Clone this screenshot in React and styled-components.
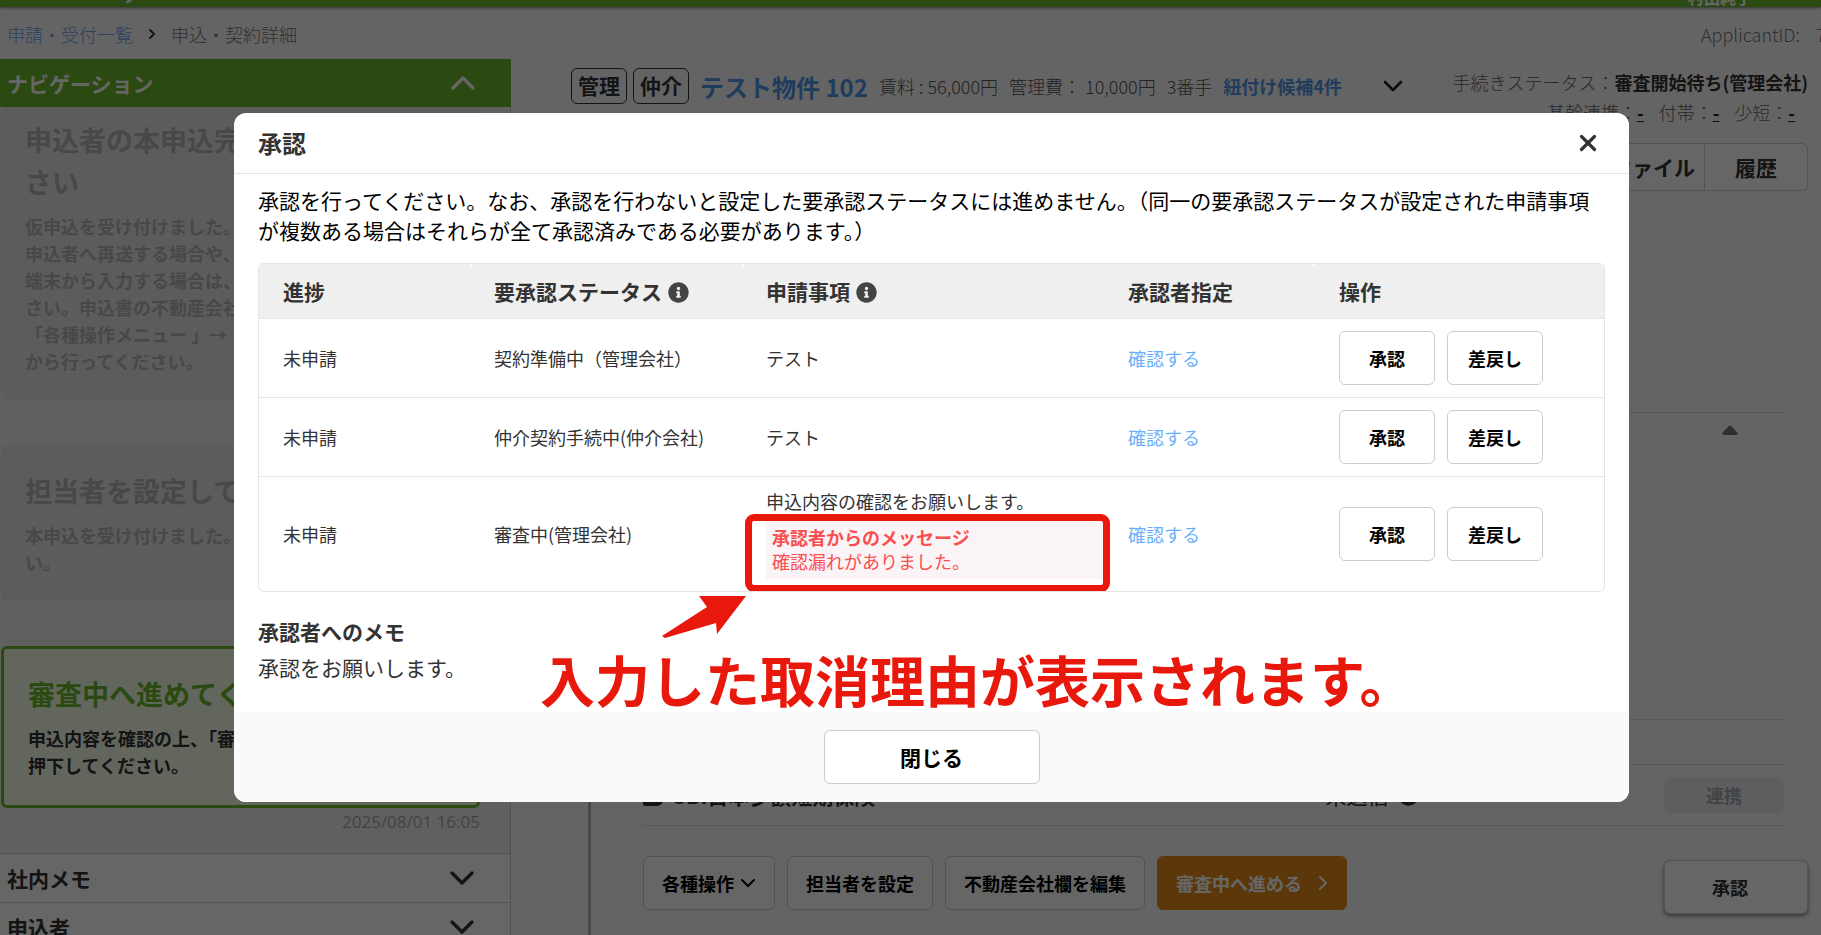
import React from "react";
import styled, { createGlobalStyle, css } from "styled-components";
import { ChevronDown, ChevronRight, ChevronUp, X } from "lucide-react";

const GlobalStyle = createGlobalStyle`
  *, *::before, *::after { box-sizing: border-box; }
  body {
    margin: 0;
    background: #fbfbfb;
    color: #333;
    font-family: "Noto Sans CJK JP", sans-serif;
    font-size: 18px;
    line-height: 27px;
    overflow: hidden;
  }
  h1, h2, h3, p { margin: 0; }
  a { color: inherit; text-decoration: none; }
  button { font-family: inherit; padding: 0; margin: 0; cursor: pointer; }
`;

const Page = styled.div`
  position: relative;
  height: 100vh;
  overflow: hidden;
`;

const TopBar = styled.header`
  display: flex;
  justify-content: space-between;
  align-items: flex-end;
  height: 7px;
  padding: 0 69px 0 38px;
  background: #6bb82c;
  color: #fff;
  font-weight: 700;
  box-shadow: 0 1px 3px rgba(0, 0, 0, 0.5);
`;

const Brand = styled.span`
  padding-bottom: 5px;
  font-size: 20px;
  line-height: 24px;
`;

const UserName = styled.span`
  padding-bottom: 1px;
  font-size: 16px;
  line-height: 18px;
`;

const CrumbBar = styled.nav`
  display: flex;
  align-items: center;
  gap: 11px;
  height: 52px;
  padding: 2px 0 0 7px;
  color: #777;
  font-weight: 300;
  white-space: nowrap;

  a { color: #6ba5f2; }
  svg { color: #333; }
`;

const ApplicantId = styled.span`
  display: flex;
  gap: 16px;
  margin-left: auto;
  width: 120px;
`;

const Columns = styled.div`
  display: flex;
  align-items: flex-start;
`;

const Side = styled.aside`
  flex: 0 0 511px;
  border-right: 1px solid #ccc;
  background: #f0f0f0;
`;

const AccordionHead = styled.button`
  display: flex;
  justify-content: space-between;
  align-items: center;
  width: 100%;
  height: 49px;
  padding: 0 28px 0 7px;
  border: 0;
  font-size: 21px;
  font-weight: 700;
  background: #fff;
  color: #333;
  border-top: 1px solid #ccc;

  ${(p) =>
    p.$open &&
    css`
      width: calc(100% + 1px);
      height: 48px;
      border: 0;
      background: #6bb82c;
      color: #fff;
    `}
`;

const Steps = styled.div`
  display: flex;
  flex-direction: column;
  gap: 45px;
  padding: 0 30px 0 1px;
`;

const stepTones = {
  done: css`
    background: #e6e6e6;
    color: #b4b4b4;
    border-color: #e6e6e6;
  `,
  current: css`
    background: #f8ffe9;
    border-color: #6bb82c;
  `,
};

const StepCard = styled.section`
  padding: ${(p) => p.$pad};
  border: 3px solid;
  border-radius: 6px;
  font-weight: 700;
  ${(p) => stepTones[p.$tone]}

  h2 {
    margin-bottom: 10px;
    font-size: 27px;
    line-height: 42px;
    color: ${(p) => (p.$tone === "current" ? "#6bb82c" : "inherit")};
  }
`;

const Stamp = styled.p`
  padding: 0 30px 18px;
  text-align: right;
  color: #a8a8a8;
  font-family: "Open Sans", sans-serif;
  font-size: 17px;
`;

const Main = styled.main`
  flex: 1;
  min-width: 0;
  padding: 5px 13px 0 60px;
`;

const PropertyBar = styled.div`
  display: flex;
  align-items: flex-start;
  height: 54px;
  white-space: nowrap;
`;

const Property = styled.div`
  display: flex;
  align-items: center;
  gap: 11px;
  height: 44px;
  flex: 1;
  font-weight: 300;
  color: #555;

  > svg { color: #222; margin-left: 24px; }
`;

const Tags = styled.span`
  display: flex;
  gap: 6px;
`;

const Tag = styled.span`
  padding: 3px 6px 4px;
  border: 1px solid #333;
  border-radius: 6px;
  font-size: 21px;
  font-weight: 700;
  color: #333;
`;

const PropertyName = styled.a`
  font-size: 24px;
  font-weight: 700;
  && { color: #5297e8; }
`;

const Candidates = styled.a`
  font-weight: 700;
  && { color: #5297e8; }
`;

const Status = styled.div`
  padding-top: 3px;
  text-align: right;
  color: #666;
  font-weight: 300;
  line-height: 30px;

  strong { font-weight: 700; color: #333; }
`;

const Links = styled.div`
  display: flex;
  justify-content: flex-end;
  gap: 15px;
  padding-right: 13px;

  a { text-decoration: underline; color: #222; font-weight: 700; }
`;

const TabRow = styled.div`
  display: flex;
  justify-content: flex-end;
  margin-top: 25px;
`;

const Tab = styled.button`
  width: ${(p) => p.$width}px;
  height: 48px;
  border: 1px solid #ccc;
  border-left-width: ${(p) => (p.$last ? 0 : 1)}px;
  border-radius: ${(p) => (p.$last ? "0 6px 6px 0" : "6px 0 0 6px")};
  background: #fff;
  font-size: 21px;
  font-weight: 700;
  color: #333;
`;

const Workflow = styled.div`
  margin: 221px 0 0 17px;
  border-left: 3px solid #b4b4b4;
  padding: 0 24px 60px 52px;
`;

const Collapse = styled.div`
  display: flex;
  justify-content: flex-end;
  height: 307px;
  padding: 12px 46px 0 0;
  border-top: 1px solid #ddd;
`;

const Line = styled.div`
  height: ${(p) => p.$height}px;
  border-top: 1px solid #ddd;
`;

const InsuranceRow = styled.div`
  display: flex;
  align-items: center;
  height: 62px;
  border-top: 1px solid #ddd;
  border-bottom: 1px solid #ddd;
  font-size: 21px;
`;

const InsuranceName = styled.div`
  display: flex;
  align-items: center;
  gap: 8px;
  flex: 1 1 682px;
  font-weight: 700;
`;

const InsuranceState = styled.div`
  display: flex;
  align-items: center;
  gap: 9px;
  flex: 1 1 338px;
`;

const LinkageButton = styled.button`
  width: 120px;
  height: 36px;
  border: 0;
  border-radius: 6px;
  background: #e5eaf0;
  color: #a8a8a8;
  font-size: 18px;
  font-weight: 700;
`;

const Actions = styled.div`
  display: flex;
  align-items: flex-start;
  gap: 12px;
  margin-right: -24px;
  padding-top: 30px;
`;

const Button = styled.button`
  display: flex;
  align-items: center;
  justify-content: center;
  width: ${(p) => (p.$width ? `${p.$width}px` : "auto")};
  height: 54px;
  padding: 0 18px;
  border: 1px solid #ccc;
  border-radius: 6px;
  background: #fff;
  color: #000;
  font-size: ${(p) => p.$size || 18}px;
  font-weight: 700;
  white-space: nowrap;

  svg { flex: none; }
`;

const MenuButton = styled(Button)`
  gap: 2px;
  padding: 0 12px 0 18px;
  justify-content: flex-start;
`;

const ProceedButton = styled(MenuButton)`
  gap: 9px;
  border-color: #e68a19;
  background: #e68a19;
  color: #fff;
`;

const FloatingButton = styled(Button)`
  margin: 4px 0 0 auto;
  padding: 0 30px 0 18px;
  box-shadow: 0 2px 4px rgba(0, 0, 0, 0.5);
  color: #333;
`;

const Overlay = styled.div`
  position: absolute;
  inset: 0;
  display: flex;
  align-items: flex-start;
  padding: 113px 192px 0 234px;
  background: rgba(0, 0, 0, 0.6);
`;

const Dialog = styled.section`
  position: relative;
  flex: 1;
  min-width: 0;
  border-radius: 12px;
  background: #fff;
  overflow: hidden;
`;

const DialogHead = styled.header`
  display: flex;
  justify-content: space-between;
  align-items: center;
  height: 61px;
  padding: 0 24px;
  border-bottom: 1px solid #e5e5e5;

  h1 { font-size: 24px; line-height: 36px; }
`;

const CloseIcon = styled.button`
  display: flex;
  padding: 4px;
  border: 0;
  background: none;
  color: #333;
`;

const DialogBody = styled.div`
  padding: 11px 24px 27px;
  font-size: 21px;
  line-height: 30px;
`;

const Lead = styled.p`
  color: #000;
`;

const Memo = styled.div`
  line-height: 36px;

  h3 { font-size: 21px; }
`;

const TableFrame = styled.div`
  margin: 18px 0 21px;
  border: 1px solid #e5e5e5;
  border-radius: 6px;
  overflow: hidden;
`;

const Table = styled.table`
  width: 100%;
  border-collapse: separate;
  border-spacing: 0;
  table-layout: fixed;
  font-size: 18px;
  line-height: 24px;

  th {
    height: 54px;
    padding: 0 24px;
    background: #efefef;
    text-align: left;
    font-size: 21px;
    white-space: nowrap;
  }
  th:nth-child(2), th:nth-child(3) { border-top-left-radius: 5px; }
  th:nth-child(4) { border-top-right-radius: 5px; }
  th svg { vertical-align: -3px; margin-left: 6px; }
  td {
    padding: 12px 0 12px 24px;
    border-top: 1px solid #e5e5e5;
  }
`;

const ConfirmLink = styled.a`
  color: #6bb0fa;
`;

const RowActions = styled.div`
  display: flex;
  gap: 12px;
`;

const ApproverMessage = styled.div`
  width: 340px;
  height: 60px;
  margin-top: 6px;
  padding: 6px;
  background: #fbf4f7;
  color: #f94f4f;
`;

const Subject = styled.div`
  position: relative;
`;

const Highlight = styled.span`
  position: absolute;
  left: -21px;
  top: 25px;
  width: 365px;
  height: 78px;
  border: 7px solid #e8190c;
  border-radius: 9px;
`;

const Callout = styled.div`
  position: absolute;
  left: 306px;
  top: 483px;
  color: #e8190c;
  white-space: nowrap;

  svg { display: block; margin-left: 122px; }
  p { font-size: 55px; line-height: 80px; font-weight: 700; }
`;

const DialogFoot = styled.footer`
  display: flex;
  justify-content: center;
  padding: 18px;
  background: #fafafa;
`;

const InfoIcon = ({ size = 21, color = "#444" }) => (
  <svg width={size} height={size} viewBox="0 0 512 512" fill={color} aria-hidden="true">
    <path d="M256 8C119 8 8 119 8 256s111 248 248 248 248-111 248-248S393 8 256 8zm0 110a42 42 0 1 1 0 84 42 42 0 0 1 0-84zm56 254a12 12 0 0 1-12 12h-88a12 12 0 0 1-12-12v-24a12 12 0 0 1 12-12h12v-64h-12a12 12 0 0 1-12-12v-24a12 12 0 0 1 12-12h64a12 12 0 0 1 12 12v100h12a12 12 0 0 1 12 12z" />
  </svg>
);

const rows = [
  { status: "契約準備中（管理会社）", subject: "テスト" },
  { status: "仲介契約手続中(仲介会社)", subject: "テスト" },
  {
    status: "審査中(管理会社)",
    subject: "申込内容の確認をお願いします。",
    message: "確認漏れがありました。",
  },
];

function Sidebar() {
  return (
    <Side>
      <AccordionHead $open>
        ナビゲーション
        <ChevronUp size={40} strokeWidth={2} />
      </AccordionHead>
      <Steps>
        <StepCard $tone="done" $pad="9px 24px 22px 21px">
          <h2>
            申込者の本申込完了をお待ちくだ
            <br />
            さい
          </h2>
          <p>
            仮申込を受け付けました。申込書を
            <br />
            申込者へ再送する場合や、ご自身の
            <br />
            端末から入力する場合は、下記くだ
            <br />
            さい。申込書の不動産会社欄編集は
            <br />
            「各種操作メニュー 」→「編集」
            <br />
            から行ってください。
          </p>
        </StepCard>
        <StepCard $tone="done" $pad="22px 24px 22px 21px">
          <h2>担当者を設定してください</h2>
          <p>
            本申込を受け付けました。担当者を設定してくださ
            <br />
            い。
          </p>
        </StepCard>
        <StepCard $tone="current" $pad="24px 24px 26px 24px">
          <h2>審査中へ進めてください</h2>
          <p>
            申込内容を確認の上、「審査中へ進める」を
            <br />
            押下してください。
          </p>
        </StepCard>
      </Steps>
      <Stamp>2025/08/01 16:05</Stamp>
      {["社内メモ", "申込者"].map((label) => (
        <AccordionHead key={label}>
          {label}
          <ChevronDown size={40} strokeWidth={2} />
        </AccordionHead>
      ))}
    </Side>
  );
}

function Detail() {
  return (
    <Main>
      <PropertyBar>
        <Property>
          <Tags>
            <Tag>管理</Tag>
            <Tag>仲介</Tag>
          </Tags>
          <PropertyName href="#property">テスト物件 102</PropertyName>
          <span>賃料 : 56,000円</span>
          <span>管理費： 10,000円</span>
          <span>3番手</span>
          <Candidates href="#candidates">紐付け候補4件</Candidates>
          <ChevronDown size={32} />
        </Property>
        <Status>
          手続きステータス：<strong>審査開始待ち(管理会社)</strong>
          <Links>
            <span>基幹連携：<a href="#core">-</a></span>
            <span>付帯：<a href="#extra">-</a></span>
            <span>少短：<a href="#insurance">-</a></span>
          </Links>
        </Status>
      </PropertyBar>
      <TabRow>
        <Tab $width={104}>ファイル</Tab>
        <Tab $width={103} $last>履歴</Tab>
      </TabRow>
      <Workflow>
        <Collapse>
          <svg width="16" height="10" viewBox="0 0 16 10" fill="#777" aria-hidden="true">
            <path d="M7 1a1.5 1.5 0 0 1 2 0l6 6c1 1 1 3-1 3H2C0 10 0 8 1 7z" />
          </svg>
        </Collapse>
        <Line $height={45} />
        <InsuranceRow>
          <InsuranceName>
            <svg width="22" height="22" viewBox="0 0 22 22" fill="#333" aria-hidden="true">
              <path d="M0 0h14c10 0 10 22 0 22H2c-1 0-2-1-2-2z" />
            </svg>
            SBI日本少額短期保険
          </InsuranceName>
          <InsuranceState>
            未送信
            <InfoIcon size={21} color="#333" />
          </InsuranceState>
          <LinkageButton disabled>連携</LinkageButton>
        </InsuranceRow>
        <Actions>
          <MenuButton $width={132}>
            各種操作
            <ChevronDown size={24} strokeWidth={2} />
          </MenuButton>
          <Button>担当者を設定</Button>
          <Button>不動産会社欄を編集</Button>
          <ProceedButton $width={190}>
            審査中へ進める
            <ChevronRight size={24} strokeWidth={2} />
          </ProceedButton>
          <FloatingButton $width={144}>承認</FloatingButton>
        </Actions>
      </Workflow>
    </Main>
  );
}

function ApprovalDialog() {
  return (
    <Dialog role="dialog" aria-modal="true" aria-labelledby="approval-title">
      <DialogHead>
        <h1 id="approval-title">承認</h1>
        <CloseIcon aria-label="閉じる">
          <X size={26} strokeWidth={3} />
        </CloseIcon>
      </DialogHead>
      <DialogBody>
        <Lead>
          承認を行ってください。なお、承認を行わないと設定した要承認ステータスには進めません。（同一の要承認ステータスが設定された申請事項が複数ある場合はそれらが全て承認済みである必要があります。）
        </Lead>
        <TableFrame>
          <Table>
            <colgroup>
              <col style={{ width: "211px" }} />
              <col style={{ width: "272px" }} />
              <col />
              <col style={{ width: "211px" }} />
              <col style={{ width: "289px" }} />
            </colgroup>
            <thead>
              <tr>
                <th>進捗</th>
                <th>要承認ステータス<InfoIcon /></th>
                <th>申請事項<InfoIcon /></th>
                <th>承認者指定</th>
                <th>操作</th>
              </tr>
            </thead>
            <tbody>
              {rows.map((row) => (
                <tr key={row.status}>
                  <td>未申請</td>
                  <td>{row.status}</td>
                  <td>
                    <Subject>
                      {row.subject}
                      {row.message && (
                        <>
                          <ApproverMessage>
                            <strong>承認者からのメッセージ</strong>
                            <p>{row.message}</p>
                          </ApproverMessage>
                          <Highlight />
                        </>
                      )}
                    </Subject>
                  </td>
                  <td>
                    <ConfirmLink href="#approvers">確認する</ConfirmLink>
                  </td>
                  <td>
                    <RowActions>
                      <Button $width={96}>承認</Button>
                      <Button $width={96}>差戻し</Button>
                    </RowActions>
                  </td>
                </tr>
              ))}
            </tbody>
          </Table>
        </TableFrame>
        <Memo>
          <h3>承認者へのメモ</h3>
          <p>承認をお願いします。</p>
        </Memo>
      </DialogBody>
      <DialogFoot>
        <Button $width={216} $size={21}>閉じる</Button>
      </DialogFoot>
      <Callout>
        <svg width="84" height="42" viewBox="0 0 84 42" fill="#e8190c" aria-hidden="true">
          <path d="M84 0H37l8 11L0 40l3 2 51-15 1 11z" />
        </svg>
        <p>入力した取消理由が表示されます。</p>
      </Callout>
    </Dialog>
  );
}

export default function App() {
  return (
    <>
      <GlobalStyle />
      <Page>
        <TopBar>
          <Brand>申込 Entry</Brand>
          <UserName>村田純子</UserName>
        </TopBar>
        <CrumbBar>
          <a href="#list">申請・受付一覧</a>
          <ChevronRight size={16} strokeWidth={3} />
          申込・契約詳細
          <ApplicantId>
            ApplicantID: <span>76</span>
          </ApplicantId>
        </CrumbBar>
        <Columns>
          <Sidebar />
          <Detail />
        </Columns>
        <Overlay>
          <ApprovalDialog />
        </Overlay>
      </Page>
    </>
  );
}
